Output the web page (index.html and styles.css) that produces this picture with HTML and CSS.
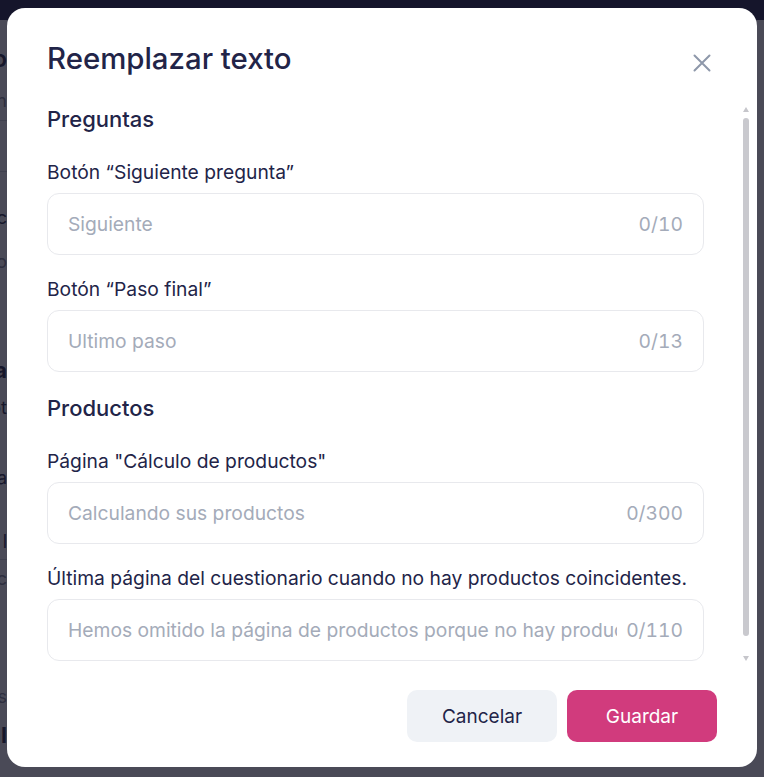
FILE: index.html
```html
<!DOCTYPE html>
<html lang="es">
<head>
<meta charset="utf-8">
<title>Reemplazar texto</title>
<link rel="stylesheet" href="styles.css">
</head>
<body>
<div class="page">
  <div class="page-header"></div>
  <div class="page-side">
    <div class="frag frag-dark frag-big" style="margin-top:28px">Encabezado</div>
    <div class="frag frag-light" style="margin-top:20px">Configuración</div>
    <div class="frag-line" style="margin-top:8px"></div>
    <div class="frag-line" style="margin-top:50px"></div>
    <div class="frag frag-dark" style="margin-top:35px">Pregunta c</div>
    <div class="frag frag-light" style="margin-top:22px">Texto o</div>
    <div class="frag frag-dark frag-bold" style="margin-top:86px">Nueva</div>
    <div class="frag frag-dark" style="margin-top:16px">Bot</div>
    <div class="frag frag-dark" style="margin-top:48px">Página</div>
    <div class="frag frag-dark" style="margin-top:42px">Final l</div>
    <div class="frag-line" style="margin-top:6px"></div>
    <div class="frag frag-light" style="margin-top:8px">Producto c</div>
    <div class="frag frag-light" style="margin-top:96px">Textos</div>
    <div class="frag frag-dark frag-bold" style="margin-top:16px">Total</div>
  </div>
</div>

<div class="overlay">
  <div class="modal">
    <div class="modal-header">
      <h1 class="modal-title">Reemplazar texto</h1>
      <button class="close-btn" type="button" aria-label="Cerrar">
        <svg width="18" height="18" viewBox="0 0 18 18" aria-hidden="true">
          <path d="M1.5 1.5 L16.5 16.5 M16.5 1.5 L1.5 16.5" stroke="#8e98aa" stroke-width="2" stroke-linecap="round" fill="none"/>
        </svg>
      </button>
    </div>

    <div class="modal-body">
      <div class="body-content">
        <section class="section">
          <h2 class="section-title">Preguntas</h2>
          <div class="field">
            <label class="field-label">Botón “Siguiente pregunta”</label>
            <div class="input-box">
              <input class="input" type="text" placeholder="Siguiente">
              <span class="counter">0/10</span>
            </div>
          </div>
          <div class="field">
            <label class="field-label">Botón “Paso final”</label>
            <div class="input-box">
              <input class="input" type="text" placeholder="Ultimo paso">
              <span class="counter">0/13</span>
            </div>
          </div>
        </section>

        <section class="section">
          <h2 class="section-title">Productos</h2>
          <div class="field">
            <label class="field-label">Página "Cálculo de productos"</label>
            <div class="input-box">
              <input class="input" type="text" placeholder="Calculando sus productos">
              <span class="counter">0/300</span>
            </div>
          </div>
          <div class="field">
            <label class="field-label">Última página del cuestionario cuando no hay productos coincidentes.</label>
            <div class="input-box">
              <input class="input" type="text" placeholder="Hemos omitido la página de productos porque no hay productos coincidentes">
              <span class="counter">0/110</span>
            </div>
          </div>
        </section>
      </div>

      <div class="scrollbar" aria-hidden="true">
        <span class="scroll-arrow scroll-arrow-up"></span>
        <span class="scroll-thumb"></span>
        <span class="scroll-arrow scroll-arrow-down"></span>
      </div>
    </div>

    <div class="modal-footer">
      <button class="btn btn-secondary" type="button">Cancelar</button>
      <button class="btn btn-primary" type="button">Guardar</button>
    </div>
  </div>
</div>
</body>
</html>
```

FILE: styles.css
```css
* {
  box-sizing: border-box;
}

html, body {
  margin: 0;
  padding: 0;
  width: 764px;
  height: 777px;
  overflow: hidden;
  font-family: Inter, "Noto Sans", "Liberation Sans", sans-serif;
}

/* background page */
.page {
  width: 764px;
  height: 777px;
  background: #ffffff;
}

.page-header {
  height: 20px;
  background: #232548;
}

.page-side {
  width: 7px;
  direction: rtl;
  display: flex;
  flex-direction: column;
}

.frag {
  white-space: nowrap;
  font-size: 18px;
  line-height: 22px;
  text-align: right;
}

.frag-big {
  font-size: 24px;
  font-weight: 600;
}

.frag-bold {
  font-weight: 700;
  font-size: 22px;
}

.frag-dark {
  color: #2a2c48;
}

.frag-light {
  color: #8a8d9b;
}

.frag-line {
  width: 7px;
  height: 1px;
  background: #d0d3da;
}

/* overlay + modal */
.overlay {
  position: fixed;
  inset: 0;
  background: rgba(17, 17, 34, 0.76);
  padding: 8px 7px 10px 7px;
  display: flex;
}

.modal {
  width: 750px;
  height: 759px;
  background: #ffffff;
  border-radius: 18px;
  display: flex;
  flex-direction: column;
  padding: 0 6px 0 40px;
  color: #222448;
}

.modal-header {
  display: flex;
  align-items: flex-start;
  justify-content: space-between;
  padding: 33px 37px 0 0;
}

.modal-title {
  margin: 0;
  font-size: 29.4px;
  line-height: 35px;
  font-weight: 500;
  color: #222448;
}

.close-btn {
  margin-top: 10px;
  width: 24px;
  height: 24px;
  padding: 3px;
  border: 0;
  background: transparent;
  display: flex;
  align-items: center;
  justify-content: center;
  cursor: pointer;
}

.modal-body {
  margin-top: 27px;
  height: 561px;
  display: flex;
}

.body-content {
  flex: 1;
  min-width: 0;
  overflow: hidden;
  padding: 2px 36px 20px 0;
  display: flex;
  flex-direction: column;
  gap: 22px;
}

/* scrollbar rail */
.scrollbar {
  width: 11px;
  flex: none;
  display: flex;
  flex-direction: column;
  align-items: center;
  padding-top: 4px;
}

.scroll-arrow {
  width: 0;
  height: 0;
  border-left: 3.5px solid transparent;
  border-right: 3.5px solid transparent;
}

.scroll-arrow-up {
  border-bottom: 5px solid #c6c6cb;
}

.scroll-arrow-down {
  border-top: 5px solid #c6c6cb;
  margin-top: 20px;
}

.scroll-thumb {
  margin-top: 6px;
  width: 6px;
  height: 518px;
  border-radius: 3px;
  background: #c9c9ce;
}

.section {
  display: flex;
  flex-direction: column;
  gap: 22px;
}

.section-title {
  margin: 0 0 5px 0;
  font-size: 22px;
  line-height: 28px;
  font-weight: 500;
  color: #222448;
}

.field {
  display: flex;
  flex-direction: column;
  gap: 9px;
}

.field-label {
  font-size: 19.25px;
  line-height: 24px;
  font-weight: 400;
  color: #222448;
  white-space: nowrap;
}

.input-box {
  height: 62px;
  flex: none;
  border: 1px solid #e8e9ed;
  border-radius: 12px;
  display: flex;
  align-items: center;
  padding: 0 20px;
  gap: 9px;
  background: #ffffff;
}

.input {
  flex: 1;
  min-width: 0;
  border: 0;
  outline: none;
  padding: 0;
  font-family: inherit;
  font-size: 19.25px;
  color: #222448;
  background: transparent;
}

.input::placeholder {
  color: #a4abb9;
  opacity: 1;
}

.counter {
  font-size: 19.25px;
  color: #a4abb9;
  white-space: nowrap;
  font-variant-numeric: tabular-nums;
}

.modal-footer {
  margin-top: 26px;
  display: flex;
  justify-content: flex-end;
  gap: 10px;
  padding-right: 34px;
}

.btn {
  width: 150px;
  height: 52px;
  border: 0;
  border-radius: 10px;
  font-family: inherit;
  font-size: 19px;
  font-weight: 400;
  cursor: pointer;
}

.btn-secondary {
  background: #eff2f6;
  color: #222448;
}

.btn-primary {
  background: #d13b7d;
  color: #ffffff;
}
```
